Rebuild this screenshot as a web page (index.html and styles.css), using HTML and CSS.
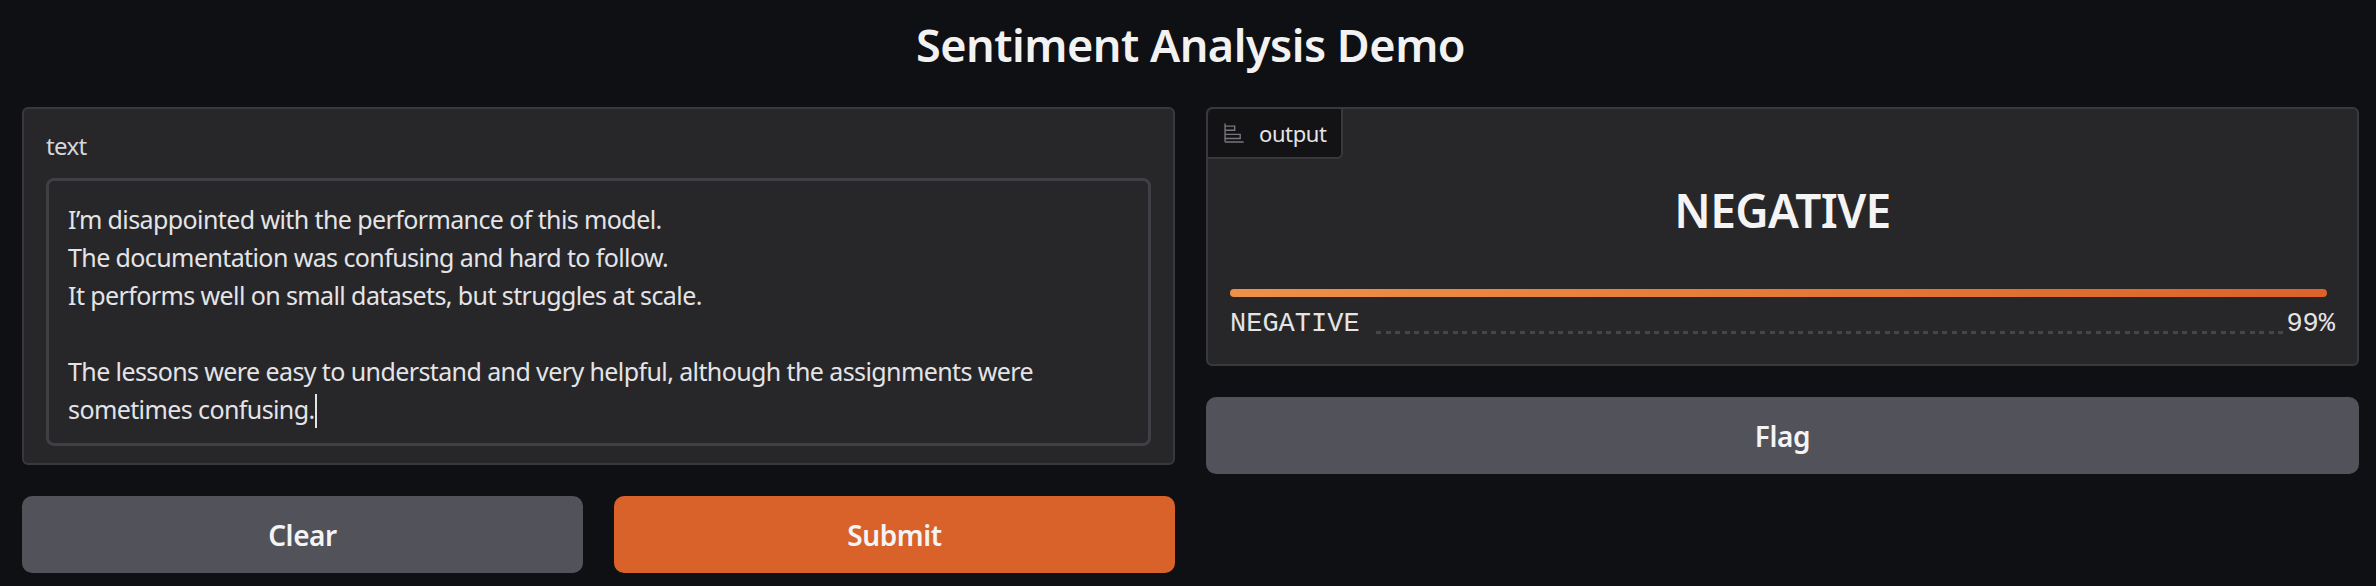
FILE: index.html
```html
<!DOCTYPE html>
<html lang="en">
<head>
  <meta charset="UTF-8" />
  <title>Sentiment Analysis Demo</title>
  <link rel="stylesheet" href="styles.css">
</head>
<body>
  <h1>Sentiment Analysis Demo</h1>

  <div class="columns">
    <div class="col">
      <div class="panel input-panel">
        <label class="field-label">text</label>
        <div class="textbox">I’m disappointed with the performance of this model.
The documentation was confusing and hard to follow.
It performs well on small datasets, but struggles at scale.

The lessons were easy to understand and very helpful, although the assignments were
sometimes confusing.<span class="caret"></span></div>
      </div>
      <div class="btn-row">
        <button class="btn">Clear</button>
        <button class="btn primary">Submit</button>
      </div>
    </div>

    <div class="col">
      <div class="panel output-panel">
        <div class="tab">
          <svg class="tab-icon" width="22" height="22" viewBox="0 0 32 32">
            <path fill="#77777e" d="M4 2H2v26a2 2 0 0 0 2 2h26v-2H4v-3h22v-8H4v-4h14V5H4Zm20 17v4H4v-4ZM16 7v4H4V7Z"/>
          </svg>
          <span>output</span>
        </div>
        <div class="result">NEGATIVE</div>
        <div class="bar"></div>
        <div class="score-row">
          <span>NEGATIVE</span>
          <span class="dots"></span>
          <span>99%</span>
        </div>
      </div>
      <button class="btn flag">Flag</button>
    </div>
  </div>
</body>
</html>
```

FILE: styles.css
```css
body {
  font-family: "Noto Sans", sans-serif;
  background: #0f1013;
  color: #e8e8ea;
  margin: 0;
  padding: 0 17px 0 22px;
}
h1 {
  margin: 0;
  height: 107px;
  padding-top: 21px;
  box-sizing: border-box;
  text-align: center;
  font-size: 45px;
  line-height: 48px;
  font-weight: 600;
  letter-spacing: -0.5px;
  color: #f2f2f3;
}
.columns {
  display: grid;
  grid-template-columns: 1153px 1153px;
  gap: 31px;
}
.col {
  display: flex;
  flex-direction: column;
  gap: 31px;
}
.panel {
  background: #27272a;
  border: 2px solid #38383d;
  border-radius: 6px;
  box-sizing: border-box;
}
.input-panel {
  height: 358px;
  padding: 21px 22px 0;
}
.field-label {
  display: block;
  font-size: 24px;
  line-height: 32px;
  letter-spacing: -0.6px;
  color: #d6d6d9;
  margin-bottom: 16px;
}
.textbox {
  height: 268px;
  box-sizing: border-box;
  border: 3px solid #3f3f46;
  border-radius: 8px;
  padding: 19px 19px;
  font-size: 25px;
  line-height: 38px;
  letter-spacing: -0.6px;
  white-space: pre-line;
  color: #e4e4e7;
}
.caret {
  display: inline-block;
  width: 2px;
  height: 34px;
  background: #e4e4e7;
  vertical-align: -9px;
}
.btn-row {
  display: grid;
  grid-template-columns: 561px 561px;
  gap: 31px;
}
.btn {
  height: 77px;
  border: none;
  border-radius: 10px;
  background: #52525b;
  color: #f4f4f5;
  font-family: inherit;
  font-size: 28px;
  font-weight: 600;
  letter-spacing: -0.4px;
}
.primary {
  background: #d9622b;
}
.output-panel {
  height: 259px;
  padding: 0 22px;
}
.tab {
  display: flex;
  align-items: center;
  gap: 14px;
  width: 135px;
  height: 50px;
  margin: 0 0 0 -22px;
  padding-left: 15px;
  box-sizing: border-box;
  background: #131316;
  border-right: 2px solid #38383d;
  border-bottom: 2px solid #38383d;
  border-radius: 6px 0 6px 0;
  font-size: 22px;
  letter-spacing: -0.4px;
  color: #e4e4e7;
}
.result {
  margin-top: 25px;
  text-align: center;
  font-size: 46px;
  line-height: 52px;
  font-weight: 600;
  letter-spacing: -0.6px;
  color: #f4f4f5;
}
.bar {
  margin-top: 53px;
  width: 1097px;
  height: 8px;
  border-radius: 4px;
  background: linear-gradient(to right, #ee9148, #dc6229);
}
.score-row {
  display: flex;
  align-items: flex-end;
  margin-top: 9px;
  font-family: "Liberation Mono", monospace;
  font-size: 27px;
  line-height: 36px;
  color: #e4e4e7;
}
.dots {
  flex: 1;
  height: 3px;
  margin: 0 0 8px 16px;
  background: repeating-linear-gradient(to right, #45454c 0 5px, transparent 5px 9.6px);
}
```
